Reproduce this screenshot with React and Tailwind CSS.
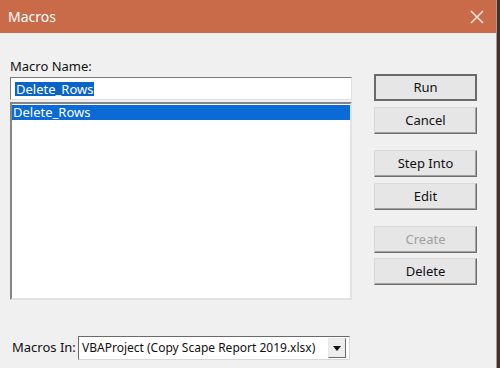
import React from "react";

const font = { fontFamily: '"Noto Sans", "Open Sans", sans-serif' };

function Btn({ children, def, disabled, className = "" }) {
  return (
    <div
      className={
        "h-[27px] w-[103px] flex items-center justify-center text-[13px] bg-[#e6e6e6] " +
        (def
          ? "border-2 border-[#6a6a6a] "
          : "border border-[#d8d8d8] border-b-[#6f6f6f] border-r-[#6f6f6f] shadow-[inset_-1px_-1px_0_#a0a0a0] ") +
        (disabled ? "text-[#a0a0a0] " : "text-[#111] ") +
        className
      }
    >
      {children}
    </div>
  );
}

export default function App() {
  return (
    <div className="w-[500px] h-[368px] bg-[#3a3535] flex overflow-hidden" style={font}>
      <div className="w-[497px] h-full flex flex-col bg-[#f0f0f0] border-r border-[#c98d7c]">
        <div className="h-[33px] shrink-0 bg-[#c96b49] flex items-center justify-between pl-[8px] pr-[10px]">
          <span className="text-white text-[14px] leading-none">Macros</span>
          <svg width="16" height="16" viewBox="0 0 16 16" className="mr-[1px]">
            <path d="M2 2L14 14M14 2L2 14" stroke="#f5e3dc" strokeWidth="1.6" />
          </svg>
        </div>
        <div className="flex-1 flex flex-col px-[10px]">
          <div className="flex">
            <div className="w-[342px] flex flex-col pt-[25px]">
              <div className="text-[13px] leading-[16px] text-[#111]">Macro Name:</div>
              <div className="mt-[3px] h-[23px] bg-white border border-[#7a7a7a] border-b-[#e0e0e0] border-r-[#e0e0e0] flex items-center pl-[4px]">
                <span className="bg-[#0a63c9] text-white text-[13px] leading-[14px] px-[1px]">Delete_Rows</span>
              </div>
              <div className="mt-[2px] h-[198px] bg-white border-2 border-[#858585] border-b-[#e2e2e2] border-r-[#e2e2e2] pt-[1px]">
                <div className="h-[15px] bg-[#0a6ad6] text-white text-[13px] leading-[15px] pl-[1px]">Delete_Rows</div>
              </div>
            </div>
            <div className="ml-[22px] pt-[41px] flex flex-col">
              <Btn def>Run</Btn>
              <Btn className="mt-[6px]">Cancel</Btn>
              <Btn className="mt-[16px]">Step Into</Btn>
              <Btn className="mt-[6px]">Edit</Btn>
              <Btn className="mt-[16px]" disabled>Create</Btn>
              <Btn className="mt-[5px]">Delete</Btn>
            </div>
          </div>
          <div className="mt-[36px] flex items-center">
            <span className="ml-[2px] w-[66px] text-[13px] text-[#111]">Macros In:</span>
            <div className="w-[272px] h-[24px] bg-white border border-[#6a6a6a] border-b-[#d8d8d8] border-r-[#d8d8d8] flex items-center justify-between">
              <span className="pl-[3px] text-[12px] text-[#111] leading-[16px] whitespace-nowrap">VBAProject (Copy Scape Report 2019.xlsx)</span>
              <div className="w-[18px] h-[20px] mr-[3px] bg-[#ededed] border border-[#e8e8e8] border-b-[#6a6a6a] border-r-[#6a6a6a] flex items-center justify-center">
                <svg width="8" height="5" viewBox="0 0 8 5"><path d="M0 0H8L4 5Z" fill="#111" /></svg>
              </div>
            </div>
          </div>
        </div>
      </div>
    </div>
  );
}
